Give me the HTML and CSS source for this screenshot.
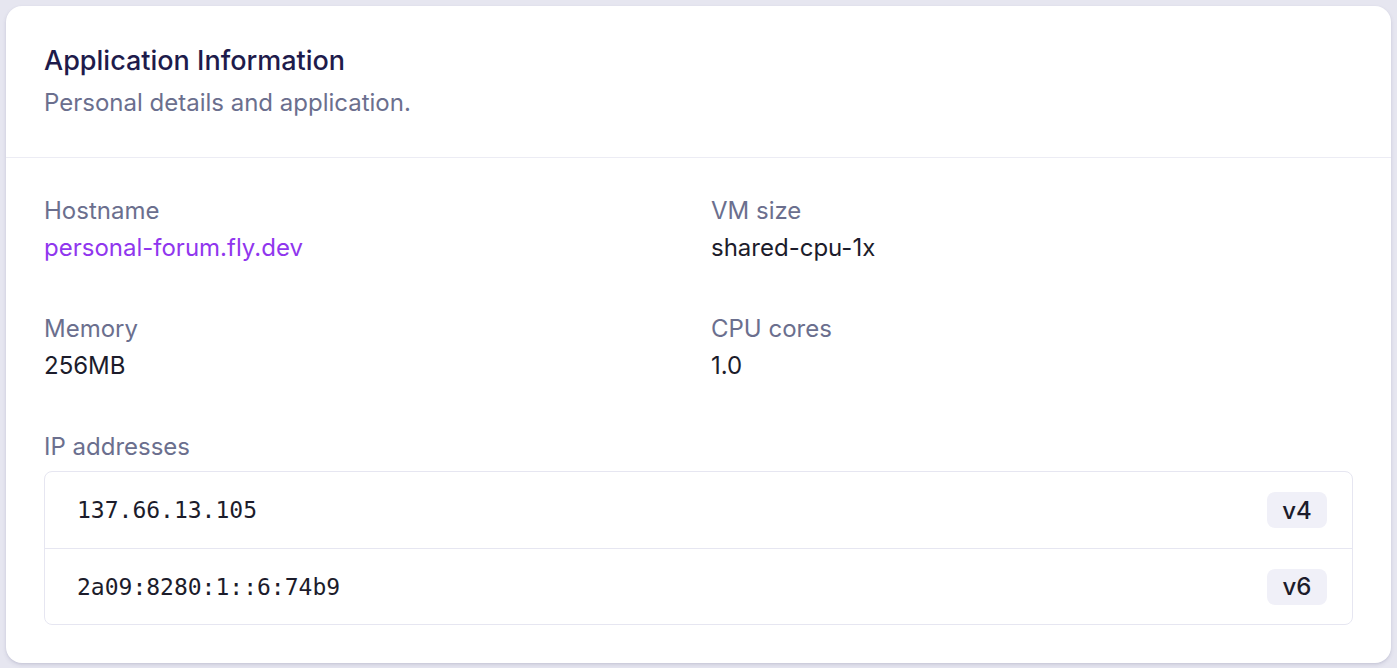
FILE: index.html
```html
<!DOCTYPE html>
<html lang="en">
<head>
<meta charset="utf-8">
<title>Application Information</title>
<link rel="stylesheet" href="styles.css">
</head>
<body>
<div class="card">
  <div class="card-header">
    <h1 class="title">Application Information</h1>
    <p class="subtitle">Personal details and application.</p>
  </div>
  <div class="card-body">
    <dl class="fields">
      <div class="field">
        <dt class="label">Hostname</dt>
        <dd class="value link">personal-forum.fly.dev</dd>
      </div>
      <div class="field">
        <dt class="label">VM size</dt>
        <dd class="value">shared-cpu-1x</dd>
      </div>
      <div class="field">
        <dt class="label">Memory</dt>
        <dd class="value">256MB</dd>
      </div>
      <div class="field">
        <dt class="label">CPU cores</dt>
        <dd class="value">1.0</dd>
      </div>
      <div class="field wide">
        <dt class="label">IP addresses</dt>
        <dd class="ip-list">
          <div class="ip-row">
            <span class="ip">137.66.13.105</span>
            <span class="badge">v4</span>
          </div>
          <div class="ip-row">
            <span class="ip">2a09:8280:1::6:74b9</span>
            <span class="badge">v6</span>
          </div>
        </dd>
      </div>
    </dl>
  </div>
</div>
</body>
</html>
```

FILE: styles.css
```css
* { box-sizing: border-box; }

html, body {
  margin: 0;
  padding: 0;
}

body {
  background: #e6e6f0;
  padding: 6px;
  font-family: Inter, "Noto Sans", sans-serif;
  height: 668px;
}

.card {
  background: #ffffff;
  border-radius: 16px;
  box-shadow: 0 2px 4px rgba(60, 60, 110, 0.12), 0 1px 2px rgba(60, 60, 110, 0.08);
  overflow: hidden;
}

.card-header {
  padding: 35px 38px 36px;
  border-bottom: 1px solid #ececf4;
}

.title {
  margin: 0;
  font-size: 27px;
  line-height: 40px;
  font-weight: 500;
  color: #1e1b4b;
}

.subtitle {
  margin: 4px 0 0;
  font-size: 24px;
  line-height: 36px;
  color: #6b6f8e;
}

.card-body {
  padding: 35px 38px 38px;
}

.fields {
  margin: 0;
  display: grid;
  grid-template-columns: 1fr 1fr;
  column-gap: 25px;
  row-gap: 45px;
}

.field.wide {
  grid-column: 1 / -1;
}

.label {
  font-size: 24px;
  line-height: 36px;
  color: #6b6f8e;
}

.value {
  margin: 1px 0 0;
  font-size: 24px;
  line-height: 36px;
  color: #1c1c2b;
}

.value.link {
  color: #9036ee;
}

.ip-list {
  margin: 6px 0 0;
  border: 1px solid #e6e6f1;
  border-radius: 8px;
}

.ip-row {
  display: flex;
  align-items: center;
  justify-content: space-between;
  height: 76px;
  padding: 0 25px 0 32px;
}

.ip-row + .ip-row {
  border-top: 1px solid #e6e6f1;
}

.ip {
  font-family: "DejaVu Sans Mono", monospace;
  font-size: 23px;
  color: #1c1c2b;
}

.badge {
  display: inline-flex;
  align-items: center;
  justify-content: center;
  width: 60px;
  height: 36px;
  border-radius: 8px;
  background: #f0f0f8;
  font-size: 24px;
  font-weight: 500;
  color: #1c1c2b;
}
```
